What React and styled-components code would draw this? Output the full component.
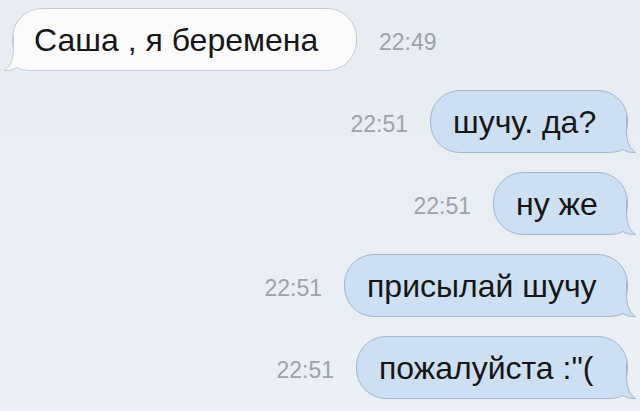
import React from 'react'
import styled, { createGlobalStyle } from 'styled-components'

const GlobalStyle = createGlobalStyle`
html, body {
  margin: 0;
  padding: 0;
  background: #e9eef4;
}
body {
  font-family: "Liberation Sans", Arial, sans-serif;
}
`

const messages = [
    { id: 1, text: 'Саша , я беремена', time: '22:49', mine: false, width: 345 },
    { id: 2, text: 'шучу. да?', time: '22:51', mine: true, width: 198 },
    { id: 3, text: 'ну же', time: '22:51', mine: true, width: 135 },
    { id: 4, text: 'присылай шучу', time: '22:51', mine: true, width: 284 },
    { id: 5, text: 'пожалуйста :"(', time: '22:51', mine: true, width: 272 },
]

function Tail({ mine }) {
    const fill = mine ? '#cddff3' : '#fbfbfc'
    const stroke = mine ? '#a3b7cd' : '#c6ccd3'
    return (
        <TailSvg $mine={mine} width="42" height="36" viewBox="0 0 42 36">
            <path
                d="M0 0 L31.5 0 L31.5 12 C31.5 24 34 31 40.5 35.5 C35 35.8 31 34.5 28 32.5 C24 35 18 35.5 10 35.5 L0 35.5 Z"
                fill={fill}
            />
            <path
                d="M31.5 0 L31.5 12 C31.5 24 34 31 40.5 35.5 C35 35.8 31 34.5 28 32.5 C24 35 18 35.5 10 35.5 L0 35.5"
                fill="none"
                stroke={stroke}
                strokeWidth="1"
            />
        </TailSvg>
    )
}

function Message({ text, time, mine, width }) {
    return (
        <Row $mine={mine}>
            {mine && <Time>{time}</Time>}
            <Bubble $mine={mine} style={{ width }}>
                <BubbleText>{text}</BubbleText>
                <Tail mine={mine} />
            </Bubble>
            {!mine && <Time>{time}</Time>}
        </Row>
    )
}

export default function App() {
    return (
        <Chat>
            <GlobalStyle />
            {messages.map(m => (
                <Message key={m.id} {...m} />
            ))}
        </Chat>
    )
}

const Chat = styled.div`
width: 640px;
height: 411px;
box-sizing: border-box;
padding: 8px 12px 0 12px;
display: flex;
flex-direction: column;
gap: 19px;
background: linear-gradient(180deg, #e8edf3 0%, #ebf0f6 100%);
overflow: hidden;
`

const Row = styled.div`
display: flex;
align-items: center;
justify-content: ${p => (p.$mine ? 'flex-end' : 'flex-start')};
gap: 22px;
`

const Bubble = styled.div`
position: relative;
box-sizing: border-box;
height: 63px;
border-radius: 30px;
border: 1px solid ${p => (p.$mine ? '#a3b7cd' : '#c6ccd3')};
background: ${p => (p.$mine ? '#cddff3' : '#fbfbfc')};
display: flex;
align-items: center;
padding: 2px 0 0 ${p => (p.$mine ? '22px' : '21px')};
`

const BubbleText = styled.span`
position: relative;
z-index: 2;
font-size: 32px;
color: #161616;
white-space: nowrap;
`

const TailSvg = styled.svg`
position: absolute;
bottom: -1px;
${p => (p.$mine ? 'right: -10px;' : 'left: -10px; transform: scaleX(-1);')}
z-index: 1;
`

const Time = styled.span`
font-size: 23px;
color: #9ea2a9;
padding-top: 6px;
white-space: nowrap;
`
